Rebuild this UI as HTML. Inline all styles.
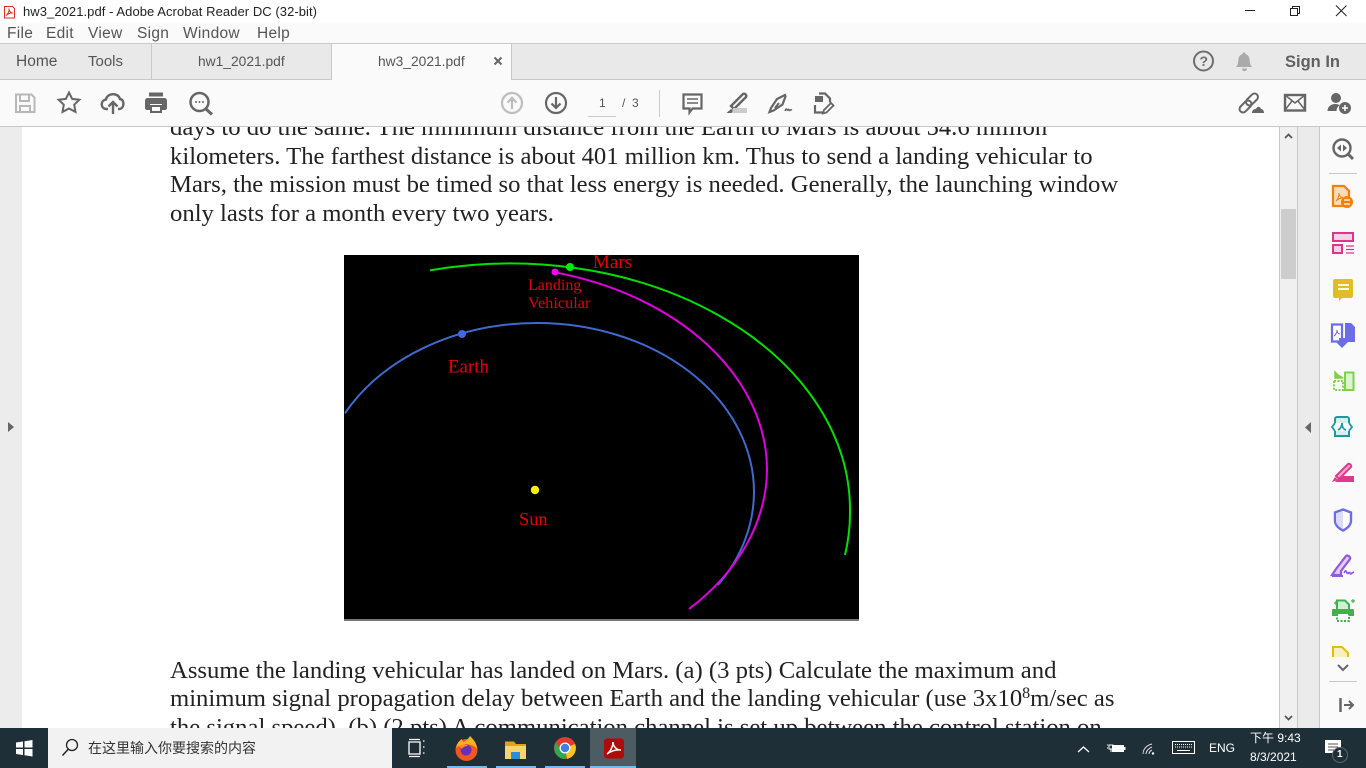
<!DOCTYPE html>
<html><head><meta charset="utf-8"><style>
html,body{margin:0;padding:0;width:1366px;height:768px;overflow:hidden;background:#fff}
*{box-sizing:border-box}
.a{position:absolute}
.t{position:absolute;white-space:nowrap;font-family:"Liberation Sans","Noto Sans CJK SC",sans-serif;line-height:1}
.l{position:absolute;left:170px;white-space:nowrap;font-family:"Liberation Serif",serif;font-size:24.7px;line-height:28px;color:#222}
.m{font-size:15.5px;letter-spacing:.3px;color:#555;top:25.5px}
sup{font-size:16px;line-height:0;vertical-align:8px}
</style></head><body>
<div class="a" id="page" style="left:0;top:127px;width:1366px;height:601px;overflow:hidden;background:#fff">
<div class="a" style="left:0;top:0;width:22px;height:601px;background:#ececec"></div>
<div class="l" style="top:-13px">days to do the same. The minimum distance from the Earth to Mars is about 54.6 million</div>
<div class="l" style="top:16px">kilometers. The farthest distance is about 401 million km. Thus to send a landing vehicular to</div>
<div class="l" style="top:44px">Mars, the mission must be timed so that less energy is needed. Generally, the launching window</div>
<div class="l" style="top:73px">only lasts for a month every two years.</div>
<div class="l" style="top:530px">Assume the landing vehicular has landed on Mars. (a) (3 pts) Calculate the maximum and</div>
<div class="l" style="top:558px">minimum signal propagation delay between Earth and the landing vehicular (use 3x10<sup>8</sup>m/sec as</div>
<div class="l" style="top:587px">the signal speed). (b) (2 pts) A communication channel is set up between the control station on</div>
</div>
<svg class="a" style="left:0;top:0" width="1366" height="768" viewBox="0 0 1366 768">
<rect x="344" y="255" width="515" height="366" fill="#000"/><rect x="344" y="619" width="515" height="2" fill="#777"/>
<path d="M345 413.200A217 169 0 0 1 537 323A217 169 0 0 1 754 492A217 169 0 0 1 718 585" fill="none" stroke="#4169cc" stroke-width="2"/>
<path d="M430 270.400A340 246.500 0 0 1 850 510A340 246.500 0 0 1 845 555" fill="none" stroke="#00e000" stroke-width="2"/>
<path d="M555 272.300A285 204.500 0 0 1 767 470A285 204.500 0 0 1 689 609" fill="none" stroke="#e000e0" stroke-width="2"/>
<circle cx="462" cy="334" r="4" fill="#4169e1"/><circle cx="570" cy="267" r="4" fill="#00f000"/><circle cx="555" cy="272" r="3.500" fill="#ff00ff"/><circle cx="535" cy="490" r="4.200" fill="#f0f000"/>
<g font-family="Liberation Serif,serif" fill="#e80000">
<text x="593" y="268" font-size="19">Mars</text><text x="528" y="290" font-size="16">Landing</text><text x="528" y="308" font-size="16.300">Vehicular</text><text x="448" y="372.500" font-size="18.900">Earth</text><text x="519" y="525" font-size="18.400">Sun</text></g>
<!-- chrome backgrounds -->
<rect x="0" y="0" width="1366" height="23" fill="#fff"/>
<rect x="0" y="23" width="1366" height="20" fill="#fafafa"/>
<rect x="0" y="43" width="1366" height="37" fill="#e9e9e9"/><rect x="0" y="43" width="1366" height="1" fill="#c8c8c8"/>
<rect x="0" y="79" width="1366" height="1" fill="#c8c8c8"/>
<rect x="151" y="44" width="1" height="35" fill="#c8c8c8"/><rect x="331" y="44" width="1" height="36" fill="#c8c8c8"/>
<rect x="332" y="44" width="179" height="36" fill="#fafafa"/><rect x="511" y="44" width="1" height="35" fill="#c8c8c8"/>
<rect x="0" y="80" width="1366" height="46" fill="#fafafa"/><rect x="0" y="126" width="1366" height="1" fill="#c8c8c8"/>
<!-- scroll/right panels -->
<path d="M8 422l6 5-6 5z" fill="#666"/>
<rect x="1279" y="127" width="1" height="601" fill="#c8c8c8"/><rect x="1280" y="127" width="17" height="601" fill="#f0f0f0"/>
<rect x="1281" y="209" width="15" height="70" fill="#cdcdcd"/><rect x="1297" y="127" width="1" height="601" fill="#c8c8c8"/>
<rect x="1298" y="127" width="21" height="601" fill="#ebebeb"/><rect x="1319" y="127" width="1" height="601" fill="#c8c8c8"/>
<rect x="1320" y="127" width="46" height="601" fill="#fafafa"/>
<path d="M1285 138l3.500-3.500 3.500 3.500M1285 716l3.500 3.500 3.500-3.500" fill="none" stroke="#555" stroke-width="1.800"/>
<path d="M1311 422l-6 5.500 6 5.500z" fill="#666"/>
<!-- window controls -->
<path d="M1245 10.500h10" stroke="#222" stroke-width="1"/>
<path d="M1290.500 8.500h7v7h-7zM1292.500 8.500v-2h7v7h-2" fill="none" stroke="#222"/>
<path d="M1336 5.500l10.500 10.500M1346.500 5.500l-10.500 10.500" stroke="#222" fill="none"/>
<!-- title icon -->
<path d="M4.500 6.500h8l2 2v9.500h-10z" fill="#fff" stroke="#d93025"/><path d="M6 15.500c2-1.500 3.500-4.500 3-7 0 2.500 1.500 4.500 4 4.500-2.500-.3-5 .7-7 2.500z" fill="none" stroke="#d93025" stroke-width="1"/>
<path d="M494.500 57.500l7 7M501.500 57.500l-7 7" stroke="#666" stroke-width="2"/>
<!-- help/bell -->
<circle cx="1203.500" cy="61" r="9.500" fill="none" stroke="#6e6e6e" stroke-width="2"/><text x="1199.500" y="66" font-family="Liberation Sans" font-weight="bold" font-size="14" fill="#6e6e6e">?</text>
<path d="M1236 67c2-2 2-4 2.500-8 .3-3 2.500-4.500 4-5 0-2 3-2 3 0 1.500.5 3.700 2 4 5 .5 4 .5 6 2.500 8zM1242 68.500h5c0 3.500-5 3.500-5 0z" fill="#aaa"/>
<!-- toolbar -->
<g fill="none" stroke="#666" stroke-width="2.200">
<path d="M16 94.500h15.500l3 3v14.500h-18.500z" stroke="#b8b8b8" stroke-width="2"/><path d="M20 95v6h9v-6M20 112v-6h10v6" stroke="#b8b8b8" stroke-width="2"/>
<path d="M69 92.500l3.200 6.400 7.200 .8-5.200 5 1.300 7.200-6.500-3.400-6.500 3.400 1.300-7.200-5.200-5 7.200-.8z" stroke-width="2"/>
<path d="M108 109h-1.500c-6 0-6.500-8.500-.5-9.500 1-6.500 12-7.500 14-.5 5 .5 4.500 10-1 10h-1M113 114v-12M108.500 106.500l4.500-4.500 4.500 4.500" stroke-width="2.400"/>
<circle cx="199.500" cy="102" r="9" stroke-width="2.500"/><path d="M206 109l6 5.500" stroke-width="3"/>
<circle cx="512" cy="103" r="10" stroke="#bdbdbd"/><path d="M512 109v-11M507.500 102.500l4.500-4.500 4.500 4.500" stroke="#bdbdbd"/>
<circle cx="556" cy="103" r="10"/><path d="M556 97v11M551.500 103.500l4.500 4.500 4.500-4.500"/>
<path d="M683.500 94.500h18v14h-9l-3 4v-4h-6z" stroke-width="2.200"/><path d="M687 99h11M687 103h11" stroke-width="1.500"/>
<path d="M731 106l12-12c2-1 4 1 3 3l-12 12z" stroke-width="2.400"/>
<path d="M785 95l-8 4-6 9-1.500 4 4-1.500 9-6 3-8zM775 108l4-5" stroke-width="2.200"/><path d="M785 111c1-3 2-2 2-1s2-2 2 0 1-1 3 0" stroke-width="1.500"/>
<path d="M819 93.500h6l5 5v4M815 105v7.500h9" stroke-width="2.200"/><path d="M824 110l7-7 2.500 2.500-7 7-3.500 1z" stroke-width="1.800"/>
<rect x="1238.500" y="103" width="14" height="7" rx="3.500" transform="rotate(-45 1245.500 106.500)" stroke-width="2"/>
<rect x="1245" y="96" width="14" height="7" rx="3.500" transform="rotate(-45 1252 99.500)" stroke-width="2"/>
<rect x="1285" y="95" width="20" height="15.500" stroke-width="2.400"/><path d="M1285 95l10 8 10-8M1285 110l7-9M1305 110l-7-9" stroke-width="1.500"/>
</g>
<path d="M1252 113c0-3 2-4 4-4 1-3 4-3 5 0 2 0 3 2 3 4z" fill="#666"/>
<g fill="#666">
<path d="M148 98h16c2 0 3 1 3 3v7c0 1-1 2-2 2h-3v-6h-12v6h-3c-1 0-2-1-2-2v-7c0-2 1-3 3-3zM149 92.500h14v4h-14z"/>
<path d="M150 105h12v8h-12zM152 107v4h8v-4z"/>
<circle cx="196" cy="102" r="1"/><circle cx="199.500" cy="102" r="1"/><circle cx="203" cy="102" r="1"/>
<path d="M731 109l3 1-2.500 3h-5z"/>
<path d="M815 96h8v6h-8z"/>
<circle cx="1336" cy="98" r="5"/><path d="M1327.500 111c0-4 3-7 8-7 2 0 3 .5 4 1.300-2 1.500-3 3.500-3 5.700z"/><circle cx="1345" cy="108" r="6"/>
</g>
<path d="M733 108h14v5h-15z" fill="#ccc"/>
<path d="M1342 108h6M1345 105v6" stroke="#fff" stroke-width="1.600"/>
<rect x="659" y="90" width="1" height="27" fill="#ccc"/><rect x="588" y="116" width="28" height="1" fill="#ccc"/>
<!-- right side icons -->
<circle cx="1342" cy="148" r="8.500" fill="none" stroke="#666" stroke-width="2.400"/><path d="M1348 154l5 5" stroke="#666" stroke-width="3"/><path d="M1341 144.500l-4 3.500 4 3.500zM1343 144.500l4 3.500-4 3.500z" fill="#666"/>
<rect x="1329" y="173" width="28" height="1" fill="#c8c8c8"/>
<path d="M1333 186h11l5 5v15h-16z" fill="#fbdcb8" stroke="#ef8200" stroke-width="2.200"/><path d="M1336 201c2-2 3-5 3-8 0 3 2 5 5 5-3-.3-6 1-8 3z" fill="none" stroke="#ef8200"/><circle cx="1347" cy="202" r="6" fill="#ef8200"/><path d="M1344 200h6M1350 204h-6" stroke="#fff" stroke-width="1.300"/>
<rect x="1333" y="233" width="20" height="8" fill="#f6d3e5" stroke="#d9368c" stroke-width="2"/><rect x="1333" y="245" width="9" height="8" fill="#f6d3e5" stroke="#d9368c" stroke-width="2"/><path d="M1346 246h8M1346 249.500h8M1346 253h8" stroke="#d9368c" stroke-width="1.200"/>
<path d="M1335 279h16c1 0 2 .5 2 2v15c0 1-1 2-2 2h-9l-3 3v-3h-4c-1 0-2-1-2-2v-15c0-1.500 1-2 2-2z" fill="#e0bc2a"/><path d="M1338 285h11M1338 289h11" stroke="#fff" stroke-width="1.800"/>
<path d="M1332 324.500h10v17h-10z" fill="#fff" stroke="#6c6ce8" stroke-width="2.200"/><path d="M1345 323h6l4 4v15h-10z" fill="#6c6ce8"/><path d="M1342 348l-6-6h12zM1345 338v5h-6v-5z" fill="#6c6ce8"/><path d="M1334 336c2-1 3-4 3-6 0 2 1 4 3 4" fill="none" stroke="#6c6ce8"/>
<rect x="1345" y="372.500" width="8.500" height="17.500" fill="#dff3cf" stroke="#7ed24a" stroke-width="2"/><path d="M1334 381v9h9v-9h-9" fill="none" stroke="#7ed24a" stroke-width="2" stroke-dasharray="2 1.400"/><path d="M1335 372v6h6zM1338 375l5 3" fill="#7ed24a" stroke="#7ed24a" stroke-width="1.500"/>
<path d="M1335 423v-4c0-1 1-2 2-2h10c1 0 2 1 2 2v4M1335 431v5h14v-5" fill="#d6eeee" stroke="#1a9a9e" stroke-width="2"/><path d="M1335 423l-3 4 3 4M1349 423l3 4-3 4M1338 430c2-1 4-3 4-7 0 4 1 6 4 7" fill="none" stroke="#1a9a9e" stroke-width="1.800"/>
<path d="M1336 476l12-12c1.500-1 4 1.500 3 3l-12 12z" fill="#f3a8ce" stroke="#dc3a8c" stroke-width="2"/><path d="M1332 482l3-5 3 3zM1341 476h13v6h-19z" fill="#dc3a8c"/>
<path d="M1343 509.500l8 3v8c0 5-4 8-8 10-4-2-8-5-8-10v-8z" fill="#fff" stroke="#6c6ce8" stroke-width="2.400"/><path d="M1343 511v18c-3-2-7-4-7-8v-7.500z" fill="#dcdcfa"/>
<path d="M1336 569l10-13c1.500-1.500 5 1 4 3l-9 12v4h-9z" fill="#dfcdf5" stroke="#9158e0" stroke-width="2.200"/><path d="M1344 573c2-4 2-2 3 0s2-2 3 0 1 0 4-1" fill="none" stroke="#9158e0" stroke-width="1.700"/><path d="M1332 576h11" stroke="#9158e0" stroke-width="2"/>
<path d="M1337 613v-12.500h8l4 4v6" fill="#d3efd3" stroke="#3fb24f" stroke-width="2"/><path d="M1333 609h20c.5 0 1 .5 1 1v6h-22v-6c0-.5.500-1 1-1z" fill="#3fb24f"/><path d="M1337 614v7h12v-7" fill="#fff" stroke="#3fb24f" stroke-width="2" stroke-dasharray="2 1.500"/><path d="M1334 603h4M1336 601v4M1351 601h4M1353 599v4" stroke="#3fb24f" stroke-width="1.200"/>
<path d="M1333 657v-10h9l6 6v4" fill="#f8efc4" stroke="#e5c000" stroke-width="2"/><rect x="1320" y="657" width="46" height="2" fill="#fafafa"/>
<path d="M1338 665l5 5 5-5" fill="none" stroke="#666" stroke-width="2"/>
<rect x="1329" y="681" width="28" height="1" fill="#c8c8c8"/>
<path d="M1340.500 698v14" stroke="#666" stroke-width="2.500"/><path d="M1344 705h9M1349 701l4 4-4 4" fill="none" stroke="#666" stroke-width="2"/>
<!-- taskbar -->
<rect x="0" y="728" width="1366" height="40" fill="#1f2f38"/>
<rect x="48" y="728" width="344" height="40" fill="#f2f2f2"/>
<path d="M16 742.500l7-1v6h-7zM24.500 741.300l8-1.300v7.500h-8zM16 749h7v6l-7-1zM24.500 749h8v7.500l-8-1.200z" fill="#fff"/>
<circle cx="72" cy="745" r="5.500" fill="none" stroke="#222" stroke-width="1.300"/><path d="M68 749.500l-5.500 6" stroke="#222" stroke-width="1.500"/>
<path d="M409 742h11v12h-11zM409 739.500h11M409 756.500h11M423 741h1.500M423 747h1.500M423 753h1.500" fill="none" stroke="#fff" stroke-width="1.300"/>
<!-- firefox -->
<circle cx="466.500" cy="750" r="11" fill="#f2571c"/><path d="M456 748c1-5 3-7 6-9 0 2 1 3 2 3 3-2 5-4 6-6 3 3 7 7 7 13-3-5-15-7-21-1z" fill="#ffb020"/><circle cx="466" cy="750" r="5.500" fill="#6a2fb8"/><path d="M459 746c3-2 7-2 9 0-3 0-5 1-6 3z" fill="#ff8a30"/>
<!-- explorer -->
<path d="M505 741.500h9l2 2.500h10v4h-21z" fill="#d9a520"/><path d="M505 746h21v13h-21z" fill="#f7d56a"/><rect x="511" y="752" width="9" height="7" fill="#2a8fd8"/>
<!-- chrome -->
<circle cx="565" cy="748" r="11" fill="#e33b2e"/><path d="M565 748L556 754a11 11 0 0 0 10 5z" fill="#2fa84f"/><path d="M556 742a11 11 0 0 0 0 12l5-3z" fill="#2fa84f"/><path d="M565 748l10-4a11 11 0 0 1-8 15z" fill="#f7c71f"/><circle cx="565" cy="748" r="5.500" fill="#fff"/><circle cx="565" cy="748" r="4.200" fill="#3f7fe0"/>
<!-- acrobat -->
<rect x="590" y="728" width="46" height="40" fill="#4d5b63"/>
<rect x="604" y="738.500" width="20" height="20" rx="3" fill="#ae0b0b"/><path d="M607 754c3-2 6-7 6-12 0 4 3 8 8 8-5-.5-10 1-14 4z" fill="none" stroke="#fff" stroke-width="1.500"/>
<rect x="447" y="766" width="40" height="2" fill="#76b9ed"/><rect x="496" y="766" width="40" height="2" fill="#76b9ed"/><rect x="545" y="766" width="40" height="2" fill="#76b9ed"/><rect x="590" y="766" width="46" height="2" fill="#76b9ed"/>
<!-- tray -->
<path d="M1078 752l5.500-5 5.500 5" fill="none" stroke="#fff" stroke-width="1.300"/>
<path d="M1109 745h4v4h-4zM1111 749v3M1107 745h1M1107 748h1" stroke="#fff" fill="none"/><rect x="1112" y="745" width="12" height="7" fill="#fff"/><rect x="1124" y="747" width="1.500" height="3" fill="#fff"/>
<path d="M1143 754c0-5 4-9 9-10M1146 754c0-3 3-6 6-7M1149 754c0-2 1-3 3-4" fill="none" stroke="#dcdcdc" stroke-width="1"/><circle cx="1153" cy="753.500" r="1.200" fill="#fff"/>
<rect x="1172.500" y="741.500" width="22" height="12" fill="none" stroke="#fff"/><path d="M1175 744.500h17M1175 747h17" stroke="#fff" stroke-dasharray="1 1"/><path d="M1177 750.500h13" stroke="#fff"/>
<path d="M1325 740h16v13h-16z" fill="#fff"/><path d="M1328 744h10M1328 747h10M1328 750h6" stroke="#555"/><circle cx="1340" cy="755" r="7.500" fill="#1f2f38" stroke="#666" stroke-width="1"/>
</svg>
<!-- text -->
<div class="t" style="left:23px;top:5px;font-size:13px;color:#222;letter-spacing:.06px">hw3_2021.pdf - Adobe Acrobat Reader DC (32-bit)</div>
<div class="t m" style="left:7px">File</div><div class="t m" style="left:46px">Edit</div><div class="t m" style="left:88px">View</div><div class="t m" style="left:137px">Sign</div><div class="t m" style="left:183px">Window</div><div class="t m" style="left:257px">Help</div>
<div class="t" style="left:16px;top:54px;font-size:15.500px;color:#555">Home</div><div class="t" style="left:88px;top:54px;font-size:15px;color:#555">Tools</div>
<div class="t" style="left:198px;top:55px;font-size:13.800px;color:#555">hw1_2021.pdf</div><div class="t" style="left:378px;top:55px;font-size:13.800px;color:#555">hw3_2021.pdf</div>
<div class="t" style="left:1285px;top:54px;font-size:16.500px;font-weight:bold;color:#606060">Sign In</div>
<div class="t" style="left:599px;top:97px;font-size:12px;color:#555">1</div><div class="t" style="left:622px;top:97px;font-size:12px;color:#555">/ &nbsp;3</div>
<div class="t" style="left:88px;top:741px;font-size:14px;color:#333">在这里输入你要搜索的内容</div>
<div class="t" style="left:1209px;top:742px;font-size:12px;color:#fff">ENG</div>
<div class="t" style="left:1250px;top:732px;font-size:12px;color:#fff">下午 9:43</div>
<div class="t" style="left:1250px;top:751px;font-size:12px;color:#fff">8/3/2021</div>
<div class="t" style="left:1337px;top:750px;font-size:10px;font-weight:bold;color:#fff">1</div>
</body></html>
